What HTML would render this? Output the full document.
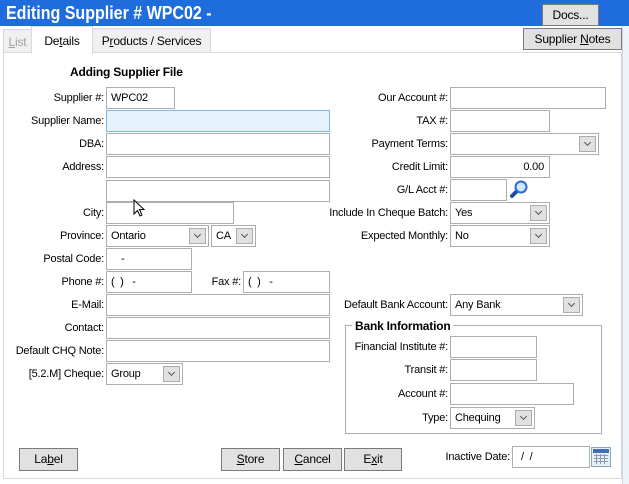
<!DOCTYPE html>
<html><head><style>
*{box-sizing:border-box;margin:0;padding:0}
body{width:629px;height:484px;background:#fff;font-family:"Liberation Sans",sans-serif;font-size:11px;color:#000;position:relative;overflow:hidden;letter-spacing:-0.2px}
.a{position:absolute}
.lab{position:absolute;text-align:right;white-space:nowrap;line-height:22px}
.in{position:absolute;border:1px solid #adadad;background:#fff;height:22px;line-height:20px;padding-left:4px;white-space:nowrap}
.sel .ar{position:absolute;right:2px;top:2px;width:17px;height:16px;background:#e1e1e1;border:1px solid #adadad}
.sel .ar:after{content:"";position:absolute;left:5px;top:3px;width:4px;height:4px;border-right:1px solid #555;border-bottom:1px solid #555;transform:rotate(45deg)}
.btn{position:absolute;background:#e1e1e1;border:1px solid #7a7a7a;text-align:center;line-height:20px;font-size:12px}
u{text-decoration:underline}
</style></head><body>
<div class="a" style="left:0;top:0;width:629px;height:26px;background:#1f6cdc"></div>
<div class="a" style="left:6px;top:2px;color:#fff;font-weight:bold;font-size:18px;line-height:22px;transform:scaleX(0.89);transform-origin:0 0;letter-spacing:0">Editing Supplier # WPC02 -</div>
<div class="btn" style="left:542px;top:4px;width:57px;height:22px">Docs...</div>
<div class="a" style="left:0;top:26px;width:629px;height:458px;background:#fff"></div>
<div class="a" style="left:3px;top:52px;width:619px;height:427px;border:1px solid #d9d9d9"></div>
<div class="a" style="left:622px;top:26px;width:7px;height:458px;background:#eef3f9;border-left:1px solid #c9d6e6"></div>
<div class="a" style="left:3px;top:29px;width:29px;height:24px;background:#f0f0f0;border:1px solid #d9d9d9;color:#a0a0a0;font-size:12px;line-height:24px;text-align:center"><u>L</u>ist</div>
<div class="a" style="left:31px;top:26px;width:62px;height:28px;background:#fff;border:1px solid #d9d9d9;border-bottom:none;font-size:12px;line-height:28px;text-align:center">De<u>t</u>ails</div>
<div class="a" style="left:92px;top:28px;width:119px;height:25px;background:#f0f0f0;border:1px solid #d9d9d9;font-size:12px;line-height:25px;text-align:center">P<u>r</u>oducts / Services</div>
<div class="btn" style="left:523px;top:28px;width:99px;height:22px">Supplier <u>N</u>otes</div>
<div class="a" style="left:70px;top:65px;font-weight:bold;font-size:12px">Adding Supplier File</div>

<div class="lab" style="right:525px;top:87px">Supplier #:</div><div class="in" style="left:106px;top:87px;width:69px">WPC02</div>
<div class="lab" style="right:525px;top:110px">Supplier Name:</div><div class="in" style="left:106px;top:110px;width:224px;background:#e5f1fb;border-color:#7ab8e8"></div>
<div class="lab" style="right:525px;top:133px">DBA:</div><div class="in" style="left:106px;top:133px;width:224px"></div>
<div class="lab" style="right:525px;top:156px">Address:</div><div class="in" style="left:106px;top:156px;width:224px"></div>
<div class="in" style="left:106px;top:180px;width:224px"></div>
<div class="lab" style="right:525px;top:202px">City:</div><div class="in" style="left:106px;top:202px;width:128px"></div>
<div class="lab" style="right:525px;top:225px">Province:</div><div class="in sel" style="left:106px;top:225px;width:103px">Ontario<div class="ar"></div></div>
<div class="in sel" style="left:211px;top:225px;width:45px">CA<div class="ar"></div></div>
<div class="lab" style="right:525px;top:248px">Postal Code:</div><div class="in" style="left:106px;top:248px;width:86px;padding-left:14px">-</div>
<div class="lab" style="right:525px;top:271px">Phone #:</div><div class="in" style="left:106px;top:271px;width:86px">(&nbsp;&nbsp;)&nbsp;&nbsp;&nbsp;-</div>
<div class="lab" style="right:388px;top:271px">Fax #:</div><div class="in" style="left:243px;top:271px;width:87px">(&nbsp;&nbsp;)&nbsp;&nbsp;&nbsp;-</div>
<div class="lab" style="right:525px;top:294px">E-Mail:</div><div class="in" style="left:106px;top:294px;width:224px"></div>
<div class="lab" style="right:525px;top:317px">Contact:</div><div class="in" style="left:106px;top:317px;width:224px"></div>
<div class="lab" style="right:525px;top:340px">Default CHQ Note:</div><div class="in" style="left:106px;top:340px;width:224px"></div>
<div class="lab" style="right:525px;top:363px">[5.2.M] Cheque:</div><div class="in sel" style="left:106px;top:363px;width:77px">Group<div class="ar"></div></div>

<div class="lab" style="right:181px;top:87px">Our Account #:</div><div class="in" style="left:450px;top:87px;width:156px"></div>
<div class="lab" style="right:181px;top:110px">TAX #:</div><div class="in" style="left:450px;top:110px;width:100px"></div>
<div class="lab" style="right:181px;top:133px">Payment Terms:</div><div class="in sel" style="left:450px;top:133px;width:149px"><div class="ar"></div></div>
<div class="lab" style="right:181px;top:156px">Credit Limit:</div><div class="in" style="left:450px;top:156px;width:100px;text-align:right;padding-right:5px">0.00</div>
<div class="lab" style="right:181px;top:179px">G/L Acct #:</div><div class="in" style="left:450px;top:179px;width:57px"></div>
<svg class="a" style="left:508px;top:179px" width="21" height="21"><line x1="4" y1="17" x2="10" y2="11" stroke="#1e4e96" stroke-width="4" stroke-linecap="round"/><circle cx="13" cy="8" r="5.5" fill="#cfe8ff" stroke="#2a6ad0" stroke-width="2"/></svg>
<div class="lab" style="right:181px;top:202px">Include In Cheque Batch:</div><div class="in sel" style="left:450px;top:202px;width:100px">Yes<div class="ar"></div></div>
<div class="lab" style="right:181px;top:225px">Expected Monthly:</div><div class="in sel" style="left:450px;top:225px;width:100px">No<div class="ar"></div></div>
<div class="lab" style="right:181px;top:294px">Default Bank Account:</div><div class="in sel" style="left:450px;top:294px;width:133px">Any Bank<div class="ar"></div></div>

<div class="a" style="left:345px;top:325px;width:257px;height:109px;border:1px solid #adadad"></div>
<div class="a" style="left:352px;top:319px;background:#fff;padding:0 3px;font-weight:bold;font-size:12px">Bank Information</div>
<div class="lab" style="right:181px;top:336px">Financial Institute #:</div><div class="in" style="left:450px;top:336px;width:87px"></div>
<div class="lab" style="right:181px;top:359px">Transit #:</div><div class="in" style="left:450px;top:359px;width:87px"></div>
<div class="lab" style="right:181px;top:383px">Account #:</div><div class="in" style="left:450px;top:383px;width:124px"></div>
<div class="lab" style="right:181px;top:407px">Type:</div><div class="in sel" style="left:450px;top:407px;width:85px">Chequing<div class="ar"></div></div>

<div class="btn" style="left:19px;top:448px;width:59px;height:23px">La<u>b</u>el</div>
<div class="btn" style="left:221px;top:448px;width:59px;height:23px"><u>S</u>tore</div>
<div class="btn" style="left:283px;top:448px;width:59px;height:23px"><u>C</u>ancel</div>
<div class="btn" style="left:344px;top:448px;width:58px;height:23px">E<u>x</u>it</div>
<div class="lab" style="right:119px;top:446px">Inactive Date:</div><div class="in" style="left:512px;top:446px;width:78px;padding-left:8px">/&nbsp;&nbsp;/</div>
<svg class="a" style="left:591px;top:447px" width="20" height="20"><rect x="0.5" y="0.5" width="19" height="19" fill="#e8eef6" stroke="#8aa"/><rect x="2" y="2" width="16" height="4" fill="#3d6fb5"/><g fill="#8a9ab0"><rect x="3" y="8" width="14" height="1"/><rect x="3" y="11" width="14" height="1"/><rect x="3" y="14" width="14" height="1"/><rect x="5" y="7" width="1" height="10"/><rect x="9" y="7" width="1" height="10"/><rect x="13" y="7" width="1" height="10"/></g></svg>
<svg class="a" style="left:133px;top:199px" width="14" height="20"><path d="M1 1 L1 15 L4.5 11.5 L7 17 L9 16 L6.5 10.5 L11 10.5 Z" fill="#fff" stroke="#000" stroke-width="1"/></svg>
</body></html>
